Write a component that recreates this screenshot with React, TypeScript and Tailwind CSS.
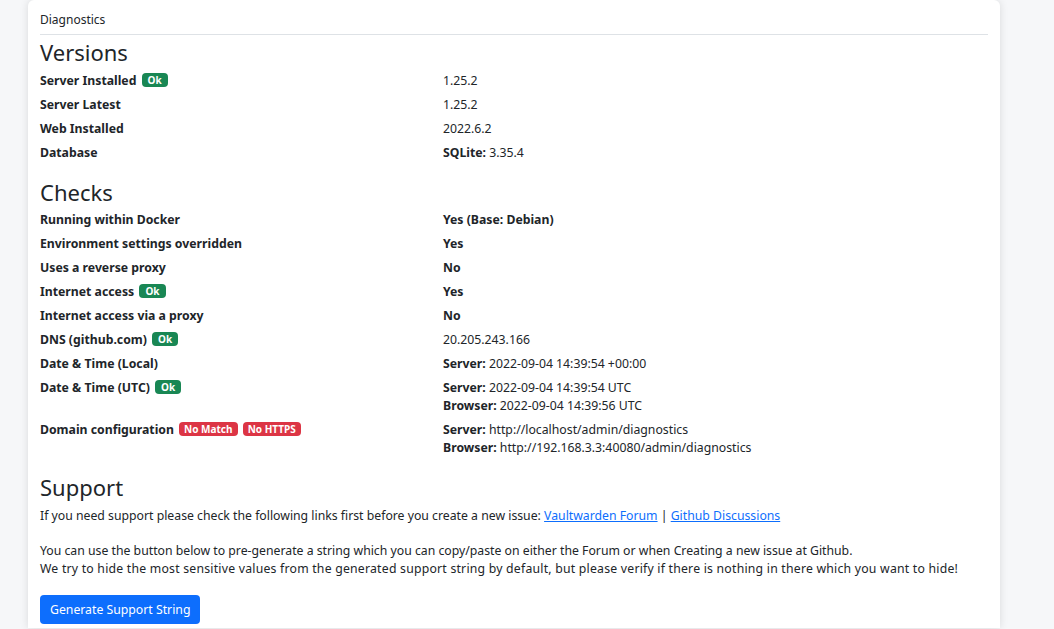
const Ok = () => (
  <span className="ml-[2px] inline-block rounded-[4px] bg-[#198754] px-[6px] py-[1px] align-[1px] text-[10px] font-bold leading-[12px] text-white">
    Ok
  </span>
);

const Bad = ({ text }: { text: string }) => (
  <span className="ml-[2px] inline-block rounded-[4px] bg-[#dc3545] px-[5px] py-[1px] align-[1px] text-[10px] font-bold leading-[12px] text-white">
    {text}
  </span>
);

const Row = ({ label, children }: { label: React.ReactNode; children: React.ReactNode }) => (
  <div className="flex py-[3px]">
    <div className="w-[403px] shrink-0 font-bold">{label}</div>
    <div>{children}</div>
  </div>
);

export default function App() {
  return (
    <div
      className="min-h-screen bg-[#f6f7f9] text-[12.25px] leading-[18px] text-[#212529]"
      style={{ fontFamily: '"Noto Sans", "Liberation Sans", sans-serif' }}
    >
      <div className="ml-[28px] w-[972px] rounded-t-[6px] bg-white px-3 pt-[11px] pb-1 shadow-[0_0_8px_rgba(0,0,0,0.12)]">
        <div className="border-b border-[#dee2e6] pb-[5px] text-[12px]">Diagnostics</div>

        <h3 className="mt-[3px] mb-[3px] text-[22px] leading-[28px]">Versions</h3>
        <Row label={<>Server Installed <Ok /></>}>1.25.2</Row>
        <Row label="Server Latest">1.25.2</Row>
        <Row label="Web Installed">2022.6.2</Row>
        <Row label="Database">
          <b>SQLite:</b> 3.35.4
        </Row>

        <h3 className="mt-[13px] mb-[2px] text-[22px] leading-[28px]">Checks</h3>
        <Row label="Running within Docker">
          <b>Yes (Base: Debian)</b>
        </Row>
        <Row label="Environment settings overridden">
          <b>Yes</b>
        </Row>
        <Row label="Uses a reverse proxy">
          <b>No</b>
        </Row>
        <Row label={<>Internet access <Ok /></>}>
          <b>Yes</b>
        </Row>
        <Row label="Internet access via a proxy">
          <b>No</b>
        </Row>
        <Row label={<>DNS (github.com) <Ok /></>}>20.205.243.166</Row>
        <Row label="Date & Time (Local)">
          <b>Server:</b> 2022-09-04 14:39:54 +00:00
        </Row>
        <Row label={<>Date &amp; Time (UTC) <Ok /></>}>
          <div>
            <b>Server:</b> 2022-09-04 14:39:54 UTC
          </div>
          <div>
            <b>Browser:</b> 2022-09-04 14:39:56 UTC
          </div>
        </Row>
        <Row
          label={
            <>
              Domain configuration <Bad text="No Match" /> <Bad text="No HTTPS" />
            </>
          }
        >
          <div>
            <b>Server:</b> http://localhost/admin/diagnostics
          </div>
          <div>
            <b>Browser:</b> http://192.168.3.3:40080/admin/diagnostics
          </div>
        </Row>

        <h3 className="mt-[13px] mb-[6px] text-[22px] leading-[28px]">Support</h3>
        <p>
          If you need support please check the following links first before you create a new issue:{' '}
          <a href="#" className="text-[#0d6efd] underline">
            Vaultwarden Forum
          </a>{' '}
          |{' '}
          <a href="#" className="text-[#0d6efd] underline">
            Github Discussions
          </a>
        </p>
        <p className="mt-[17px]">
          You can use the button below to pre-generate a string which you can copy/paste on either the Forum or when
          Creating a new issue at Github.
          <br />
          <span className="tracking-[0.22px]">
            We try to hide the most sensitive values from the generated support string by default, but please verify if
            there is nothing in there which you want to hide!
          </span>
        </p>
        <button className="mt-[17px] rounded-[4px] bg-[#0d6efd] px-[10px] py-[5px] text-[12.25px] leading-[19px] text-white">
          Generate Support String
        </button>
      </div>
    </div>
  );
}
